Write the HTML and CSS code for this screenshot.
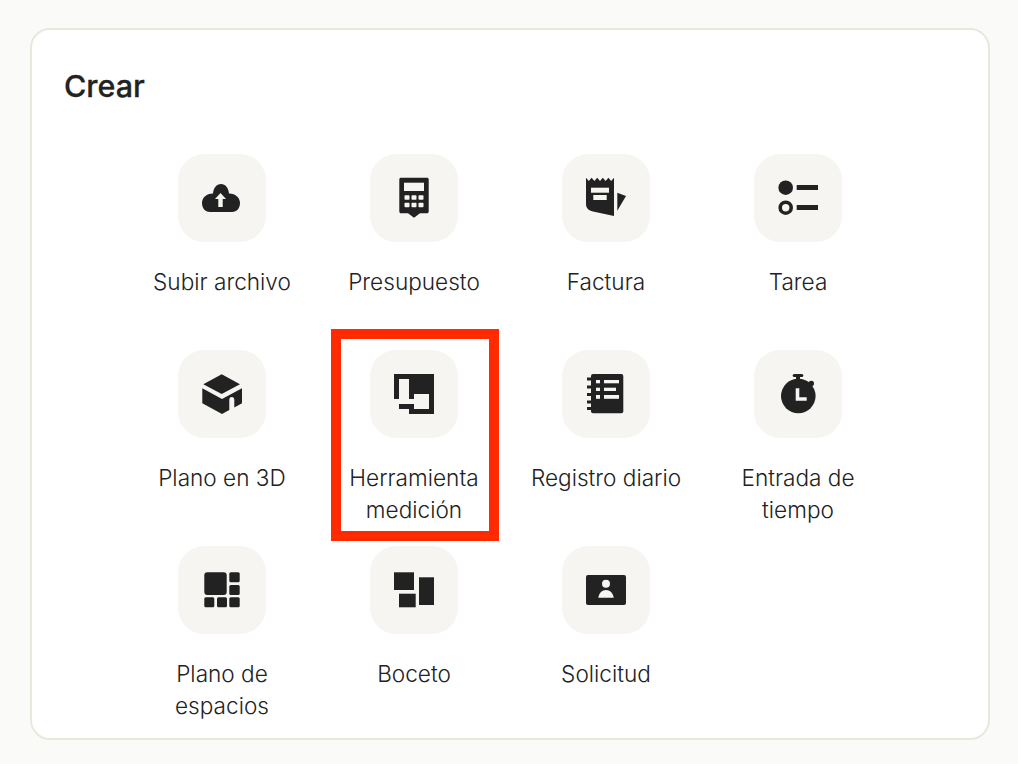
FILE: index.html
```html
<!DOCTYPE html>
<html lang="es">
<head>
    <meta charset="UTF-8">
    <title>Crear</title>
    <link rel="stylesheet" href="styles.css">
</head>
<body>
    <div class="card">
        <h1>Crear</h1>
        <div class="grid">
            <div class="item">
                <div class="tile">
                    <svg viewBox="0 0 48 48">
                        <path d="M12 38C7 38 4 34 4 29C4 24 8 19.500 15 19.500C15.500 14 18.500 10 23 10C27.500 10 30.500 14 31 19.500C38 19.500 42 24 42 29C42 34 39 38 34 38Z"/>
                        <path class="cut" d="M22.500 19L28 25H24.700V33H20.300V25H17Z"/>
                    </svg>
                </div>
                <span>Subir archivo</span>
            </div>
            <div class="item">
                <div class="tile">
                    <svg viewBox="0 0 48 48">
                        <path d="M11 3.700H37C38 3.700 38.700 4.400 38.700 5.400V37.500C38.700 38.500 38 39.300 37 39.300H30L24 43.700L18 39.300H11C10 39.300 9.300 38.500 9.300 37.500V5.400C9.300 4.400 10 3.700 11 3.700Z"/>
                        <rect class="cut" x="14" y="8.700" width="20" height="8.300"/>
                        <rect class="cut" x="14.500" y="21.300" width="5" height="4.500" rx="0.800"/>
                        <rect class="cut" x="21.500" y="21.300" width="5" height="4.500" rx="0.800"/>
                        <rect class="cut" x="28.500" y="21.300" width="5" height="4.500" rx="0.800"/>
                        <rect class="cut" x="14.500" y="28.700" width="5" height="4.500" rx="0.800"/>
                        <rect class="cut" x="21.500" y="28.700" width="5" height="4.500" rx="0.800"/>
                        <rect class="cut" x="28.500" y="28.700" width="5" height="4.500" rx="0.800"/>
                    </svg>
                </div>
                <span>Presupuesto</span>
            </div>
            <div class="item">
                <div class="tile">
                    <svg viewBox="0 0 48 48">
                        <path d="M4 3.700L6.800 7L9.600 3.700L12.400 7L15.200 3.700L18 7L20.800 3.700L23.600 7L26.400 3.700L29.200 7L32 3.700V42L11 37.500C6.500 36.500 4 34 4 30Z"/>
                        <rect class="cut" x="9" y="13.700" width="18" height="5"/>
                        <rect class="cut" x="11.300" y="21" width="13.400" height="5"/>
                        <path d="M35.300 18.700L44 22L35.300 36.700Z"/>
                    </svg>
                </div>
                <span>Factura</span>
            </div>
            <div class="item">
                <div class="tile">
                    <svg viewBox="0 0 48 48">
                        <circle cx="11.700" cy="13.700" r="7.300"/>
                        <rect x="22.700" y="11" width="21.300" height="5"/>
                        <circle class="ring" cx="11.700" cy="33.700" r="5.500"/>
                        <rect x="22.700" y="31" width="21.300" height="5"/>
                    </svg>
                </div>
                <span>Tarea</span>
            </div>
            <div class="item">
                <div class="tile">
                    <svg viewBox="0 0 48 48">
                        <path d="M23.700 4.300L42 14.300L23.700 24L5.300 14.300Z"/>
                        <path d="M4.300 18.300L24 29L44 18.300V33.300L36.300 37.500V30C36.300 28 35.500 27 33.800 27C32.100 27 31.300 28 31.300 30V40L24 44L4.300 33.300Z"/>
                    </svg>
                </div>
                <span>Plano en 3D</span>
            </div>
            <div class="item highlighted">
                <div class="tile">
                    <svg viewBox="0 0 48 48">
                        <path d="M4 4H44V44H19V39H9V34H24V39H39V24H24V29H19V9H9V29H4Z"/>
                    </svg>
                </div>
                <span>Herramienta medición</span>
            </div>
            <div class="item">
                <div class="tile">
                    <svg viewBox="0 0 48 48">
                        <rect x="9" y="4" width="32.300" height="39.300" rx="2"/>
                        <rect x="5" y="7.500" width="5" height="3"/>
                        <rect x="5" y="15.500" width="5" height="3"/>
                        <rect x="5" y="23" width="5" height="3"/>
                        <rect x="5" y="30.500" width="5" height="3"/>
                        <rect x="5" y="37" width="5" height="3"/>
                        <rect class="cut" x="14" y="10" width="4" height="3.300"/>
                        <rect class="cut" x="22" y="10" width="15" height="3.300"/>
                        <rect class="cut" x="14" y="17.700" width="4" height="3.300"/>
                        <rect class="cut" x="22" y="17.700" width="12" height="3.300"/>
                        <rect class="cut" x="14" y="25" width="4" height="3.800"/>
                        <rect class="cut" x="22" y="25" width="15" height="3.800"/>
                    </svg>
                </div>
                <span>Registro diario</span>
            </div>
            <div class="item">
                <div class="tile">
                    <svg viewBox="0 0 48 48">
                        <rect x="18.700" y="4" width="10.600" height="3" rx="1.500"/>
                        <rect x="22" y="6" width="4" height="5"/>
                        <circle cx="37.300" cy="13.500" r="2.700"/>
                        <circle cx="24.300" cy="26" r="17.300"/>
                        <path class="cut" d="M21.700 18.300H25.300V27.300H32.700V30.700H21.700Z"/>
                    </svg>
                </div>
                <span>Entrada de tiempo</span>
            </div>
            <div class="item">
                <div class="tile">
                    <svg viewBox="0 0 48 48">
                        <rect x="6.300" y="6.300" width="22.400" height="22.700" rx="3"/>
                        <rect x="31.300" y="6.300" width="10.400" height="10" rx="1.500"/>
                        <rect x="31.300" y="19" width="10.400" height="10" rx="1.500"/>
                        <rect x="6.300" y="31.300" width="10" height="10" rx="1.500"/>
                        <rect x="19" y="31.300" width="10" height="10" rx="1.500"/>
                        <rect x="31.300" y="31.300" width="10.400" height="10" rx="1.500"/>
                    </svg>
                </div>
                <span>Plano de espacios</span>
            </div>
            <div class="item">
                <div class="tile">
                    <svg viewBox="0 0 48 48">
                        <rect x="4" y="6.300" width="20" height="17.700"/>
                        <rect x="9" y="27.700" width="16.700" height="13.600"/>
                        <rect x="29" y="11.300" width="15" height="27.700"/>
                    </svg>
                </div>
                <span>Boceto</span>
            </div>
            <div class="item">
                <div class="tile">
                    <svg viewBox="0 0 48 48">
                        <rect x="4" y="9" width="40" height="30" rx="2"/>
                        <circle class="cut" cx="24" cy="17.700" r="4"/>
                        <path class="cut" d="M16.300 31.700C17 27 20 24 24 24C28 24 31 27 31.700 31.700Z"/>
                    </svg>
                </div>
                <span>Solicitud</span>
            </div>
        </div>
    </div>
</body>
</html>
```

FILE: styles.css
```css
* {
    box-sizing: border-box;
}

body {
    margin: 0;
    height: 764px;
    padding: 28px 28px 24px 30px;
    background-color: #fafaf8;
    color: #222;
    font-family: Inter, 'Noto Sans', sans-serif;
    overflow: hidden;
}

.card {
    height: 712px;
    background-color: white;
    border: 2px solid #e8e8dc;
    border-radius: 20px;
    padding: 38px 32px 0;
}

h1 {
    margin: 0;
    font-size: 30.5px;
    line-height: 36px;
    font-weight: 500;
    -webkit-text-stroke: 0.3px #222;
}

.grid {
    display: grid;
    grid-template-columns: repeat(4, 192px);
    grid-auto-rows: 176px;
    row-gap: 20px;
    justify-content: center;
    margin-top: 50px;
}

.item {
    position: relative;
    display: flex;
    flex-direction: column;
    align-items: center;
    text-align: center;
    font-size: 22.6px;
    font-weight: 350;
    line-height: 32px;
}

.item span {
    width: 164px;
    margin-top: 24px;
}

.tile {
    width: 88px;
    height: 88px;
    flex: none;
    display: flex;
    align-items: center;
    justify-content: center;
    background-color: #f7f5f1;
    border-radius: 26px;
}

.tile svg {
    width: 48px;
    height: 48px;
    fill: #222;
}

.tile .cut {
    fill: #f7f5f1;
}

.tile .ring {
    fill: none;
    stroke: #222;
    stroke-width: 3.600;
}

.highlighted::after {
    content: "";
    position: absolute;
    left: 13px;
    right: 11px;
    top: -21px;
    bottom: -15px;
    border: 10px solid #ff2a00;
}
```
